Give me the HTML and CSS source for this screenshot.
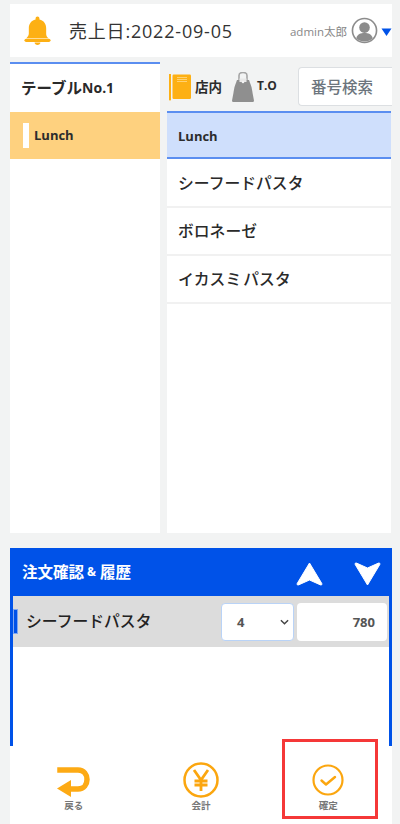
FILE: index.html
```html
<!DOCTYPE html>
<html lang="ja">
<head>
<meta charset="utf-8">
<title>注文</title>
<link rel="stylesheet" href="styles.css">
</head>
<body>
<div class="app">
  <header class="topbar">
    <svg class="bell" viewBox="0 0 28 30" width="27" height="29"><path d="M14 0.500c1.200 0 2 .8 2 2v1.200c4.600 1 7 4.600 7 9.300v5.500c0 2 1 3.200 2.500 4.500H2.500C4 21.200 5 20 5 18V13c0-4.700 2.400-8.300 7-9.300V2.500c0-1.200.8-2 2-2z" fill="#fdb014"/><rect x="0.500" y="23.500" width="27" height="3.400" rx="1.700" fill="#fdb014"/><path d="M11 27.500h6c0 1.500-1.300 2.500-3 2.500s-3-1-3-2.500z" fill="#fdb014"/></svg>
    <div class="sales-date">売上日:2022-09-05</div>
    <div class="user">
      <span class="user-name">admin太郎</span>
      <svg class="avatar" viewBox="0 0 28 28" width="27" height="27"><circle cx="14" cy="14" r="12.500" fill="none" stroke="#8c8c8c" stroke-width="1.700"/><circle cx="14" cy="11" r="5.500" fill="#8c8c8c"/><path d="M5.500 22c1-4.500 4.500-5.500 8.500-5.500s7.500 1 8.500 5.500c-2.200 2.200-5.200 3.400-8.500 3.400S7.700 24.200 5.500 22z" fill="#8c8c8c"/></svg>
      <svg class="caret" viewBox="0 0 10 8" width="11" height="8"><path d="M0 0.500h10L5 8z" fill="#0052e8"/></svg>
    </div>
  </header>

  <main class="columns">
    <aside class="side">
      <div class="table-name">テーブル<span class="table-no">No.1</span></div>
      <div class="category"><span class="category-mark"></span><span class="category-label">Lunch</span></div>
    </aside>
    <section class="menu">
      <div class="tools">
        <div class="tool">
          <svg viewBox="0 0 22 27" width="22" height="27"><path d="M0 0h2v25.500l-1 1.500-1-1.500z" fill="#fdb014"/><rect x="3.500" y="0.500" width="18.500" height="24.500" rx="1.200" fill="#fdb014"/><path d="M8 3.500h10M8 5.500h10M8 7.500h10" stroke="#ffd98a" stroke-width="0.800"/></svg>
          <span class="tool-label">店内</span>
        </div>
        <div class="tool tool-to">
          <svg viewBox="0 0 22 30" width="22" height="30"><path d="M5 8h12l2.500 7L22 28.800c0 .7-.4 1.200-1 1.200H1c-.6 0-1-.5-1-1.200L2.500 15z" fill="#8f8f8f"/><path d="M7 8V3.500C7 1.500 9 .5 11 .5s4 1 4 3V8" fill="none" stroke="#a5a5a5" stroke-width="1.600"/><path d="M7.500 6.500h7V10h-7z" fill="#e8e8e8"/><circle cx="11" cy="10" r="1.300" fill="#f2f2f2"/></svg>
          <span class="tool-label">T.O</span>
        </div>
        <div class="search">番号検索</div>
      </div>
      <div class="menu-head"><span class="menu-head-label">Lunch</span></div>
      <div class="menu-item">シーフードパスタ</div>
      <div class="menu-item">ボロネーゼ</div>
      <div class="menu-item menu-item-spaced">イカスミ パスタ</div>
    </section>
  </main>

  <section class="order">
    <div class="order-head">
      <div class="order-title">注文確認<span class="amp">&amp;</span>履歴</div>
      <svg class="arrow" viewBox="0 0 27 24" width="27" height="24"><path d="M13.500 1L25.800 21.500c.5 1-.3 1.800-1.300 1.400L13.500 18 2.500 22.900c-1 .4-1.800-.4-1.300-1.400z" fill="#fff" stroke="#fff" stroke-linejoin="round"/></svg>
      <svg class="arrow" viewBox="0 0 27 24" width="27" height="24"><path d="M13.500 23L25.800 2.500c.5-1-.3-1.800-1.300-1.400L13.500 6 2.500 1.100c-1-.4-1.800.4-1.300 1.400z" fill="#fff" stroke="#fff" stroke-linejoin="round"/></svg>
    </div>
    <div class="order-row">
      <span class="order-mark"></span>
      <span class="order-name">シーフードパスタ</span>
      <div class="qty"><span>4</span><svg viewBox="0 0 10 6" width="9" height="6"><path d="M1 1l4 4 4-4" fill="none" stroke="#444" stroke-width="1.600"/></svg></div>
      <div class="price">780</div>
    </div>
  </section>

  <footer class="actions">
    <div class="action">
      <div class="action-icon">
        <svg class="back-icon" viewBox="0 0 34 30" width="34" height="30"><path d="M3 3h18c12 0 12 19 0 19H11" fill="none" stroke="#fdaa14" stroke-width="5.500" stroke-linecap="square"/><path d="M0 21.500L14 13v17z" fill="#fdaa14"/></svg>
      </div>
      <span>戻る</span>
    </div>
    <div class="action">
      <div class="action-icon">
        <svg viewBox="0 0 36 36" width="36" height="36"><circle cx="18" cy="18" r="16.500" fill="#fff" stroke="#fba60f" stroke-width="2.500"/><path d="M11 8l7 10 7-10M18 18v11M11.500 19h13M11.500 23h13" fill="none" stroke="#fba60f" stroke-width="2.800"/></svg>
      </div>
      <span>会計</span>
    </div>
    <div class="action">
      <div class="action-icon">
        <svg viewBox="0 0 32 32" width="32" height="32"><circle cx="16" cy="16" r="14.500" fill="none" stroke="#fba60f" stroke-width="2.200"/><path d="M9.500 16.500l4.500 4 9-7.500" fill="none" stroke="#fba60f" stroke-width="2.400" stroke-linecap="round" stroke-linejoin="round"/></svg>
      </div>
      <span>確定</span>
      <div class="highlight"></div>
    </div>
  </footer>
</div>
</body>
</html>
```
FILE: styles.css
```css
* { box-sizing: border-box; }
html, body { margin: 0; padding: 0; }
body {
  background: #f2f3f3;
  font-family: "Open Sans", "Noto Sans CJK JP", sans-serif;
  color: #212529;
}
.app {
  width: 400px;
  height: 824px;
  padding: 4px 8px 0 10px;
  display: flex;
  flex-direction: column;
  overflow: hidden;
}
.topbar {
  flex: none;
  height: 53px;
  background: #fff;
  display: flex;
  align-items: center;
  padding: 0 0 0 14px;
}
.bell { flex: none; }
.sales-date {
  margin-left: 18px;
  font-size: 18px;
  letter-spacing: 0.8px;
  color: #333;
  margin-top: -2px;
}
.user {
  margin-left: auto;
  display: flex;
  align-items: center;
}
.user-name { font-size: 11.500px; color: #888; margin-right: 4px; }
.caret { margin-left: 3px; margin-top: 2px; }

.columns {
  flex: none;
  height: 476px;
  display: flex;
  gap: 7px;
}
.side {
  width: 150px;
  margin-top: 5px;
  background: #fff;
  border-top: 2px solid #5b8ef0;
}
.table-name {
  height: 48px;
  padding: 0 0 2px 11px;
  display: flex;
  align-items: center;
  font-size: 15.500px;
  font-weight: 700;
  color: #2a2a2a;
}
.table-no { font-size: 14px; }
.category {
  height: 47px;
  background: #fed17f;
  display: flex;
  align-items: center;
  padding-left: 13px;
  font-size: 13px;
  font-weight: 700;
  color: #2c2c2c;
}
.category-mark {
  width: 6px;
  height: 25px;
  background: #fff;
  margin-right: 5px;
}
.category-label { margin-top: -1px; }
.menu {
  flex: 1;
  min-width: 0;
  background: #fff;
  display: flex;
  flex-direction: column;
  margin-right: 1px;
}
.tools {
  flex: none;
  height: 54px;
  margin-right: -1px;
  padding: 6px 0 0 2px;
  background: #f2f3f3;
  display: flex;
  align-items: center;
}
.tool {
  display: flex;
  align-items: center;
  gap: 4px;
  font-size: 13.500px;
  font-weight: 700;
  color: #2c2c2c;
}
.tool-label { margin-top: -3px; }
.tool-to { margin-left: 10px; gap: 3px; font-size: 12px; }
.search {
  margin-left: auto;
  flex: none;
  width: 94px;
  height: 39px;
  margin-top: -1px;
  background: #fff;
  border: 1px solid #dcdfe2;
  border-right: 0;
  border-radius: 4px 0 0 4px;
  display: flex;
  align-items: center;
  padding-left: 12px;
  font-size: 15.500px;
  font-weight: 500;
  color: #6c757d;
}
.menu-head {
  flex: none;
  height: 48px;
  background: #cfdffc;
  border-top: 2px solid #5b8ef0;
  border-bottom: 2px solid #5b8ef0;
  display: flex;
  align-items: center;
  padding-left: 11px;
  font-size: 13px;
  font-weight: 700;
  color: #2c2c2c;
}
.menu-head-label { margin-top: 1px; }
.menu-head + .menu-item { margin-top: 1px; height: 48px; }
.menu-item {
  flex: none;
  height: 48px;
  border-bottom: 2px solid #f1f1f1;
  display: flex;
  align-items: center;
  padding: 0 0 2px 11px;
  font-size: 15.800px;
  font-weight: 500;
  color: #2a2a2a;
}
.menu-item-spaced { word-spacing: -2px; }

.order {
  flex: none;
  margin-top: 15px;
  height: 198px;
  background: #fff;
  border-left: 3px solid #0052e8;
  border-right: 3px solid #0052e8;
}
.order-head {
  height: 48px;
  margin: 0 -3px;
  background: #0052e8;
  display: flex;
  align-items: center;
  padding: 0 11px 0 12px;
  gap: 31px;
}
.order-title {
  flex: 1;
  color: #fff;
  font-size: 15.500px;
  font-weight: 700;
  margin-top: -2px;
  display: flex;
  align-items: center;
}
.amp { font-size: 12px; margin: 0 4px 0 3px; }
.arrow { margin-top: 4px; }
.order-row {
  height: 51px;
  background: #dcdcdc;
  display: flex;
  align-items: center;
}
.order-mark {
  width: 5px;
  height: 25px;
  background: #0052e8;
  border: 1px solid #7fa6f0;
  flex: none;
}
.order-name {
  flex: 1;
  margin-left: 8px;
  margin-top: -3px;
  font-size: 15.800px;
  font-weight: 500;
  color: #222;
}
.qty {
  width: 73px;
  height: 38px;
  background: #fff;
  border: 1px solid #b9d3f7;
  border-radius: 4px;
  display: flex;
  align-items: center;
  justify-content: space-between;
  padding: 0 4px 0 15px;
  font-size: 13px;
  font-weight: 700;
  color: #555;
}
.price {
  width: 90px;
  height: 38px;
  margin: 0 2px 0 3px;
  background: #fff;
  border-radius: 4px;
  display: flex;
  align-items: center;
  justify-content: flex-end;
  padding-right: 12px;
  font-size: 13px;
  font-weight: 700;
  color: #555;
}

.actions {
  flex: 1;
  background: #fff;
  display: grid;
  grid-template-columns: 1fr 1fr 1fr;
  align-items: start;
}
.action {
  position: relative;
  display: flex;
  flex-direction: column;
  align-items: center;
  font-size: 9.500px;
  line-height: 12px;
  font-weight: 700;
  color: #777;
  padding-top: 16px;
}
.action-icon {
  height: 36px;
  display: flex;
  align-items: center;
  justify-content: center;
  margin-bottom: 2px;
}
.back-icon { margin-top: 4px; }
.highlight {
  position: absolute;
  top: -7px;
  left: 17px;
  width: 96px;
  height: 80px;
  border: 3px solid #f53838;
}
```
